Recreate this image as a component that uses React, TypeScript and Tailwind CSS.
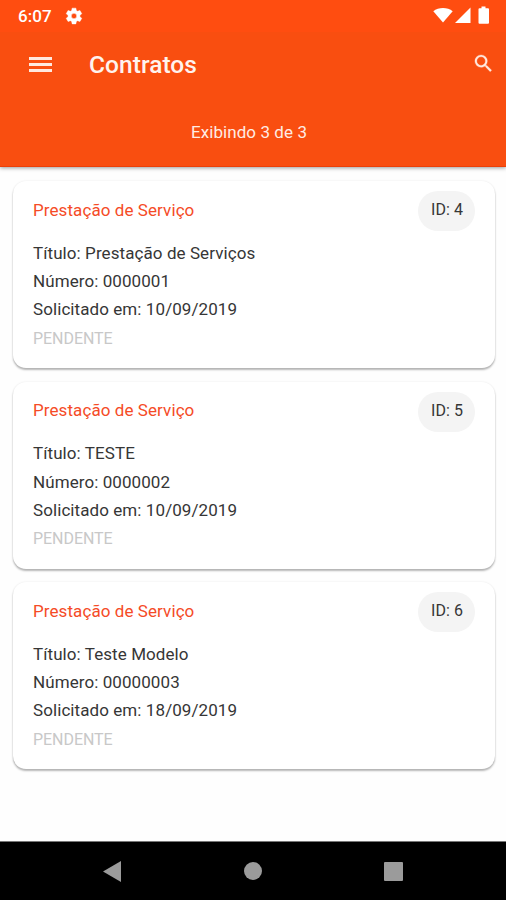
import React from "react";

type Contract = { id: number; title: string; number: string; date: string };

const contracts: Contract[] = [
  { id: 4, title: "Prestação de Serviços", number: "0000001", date: "10/09/2019" },
  { id: 5, title: "TESTE", number: "0000002", date: "10/09/2019" },
  { id: 6, title: "Teste Modelo", number: "00000003", date: "18/09/2019" },
];

function StatusBar() {
  return (
    <div className="flex h-8 items-center bg-[#ff4d10] pr-[16px] pl-[18px] text-white">
      <span className="text-[17px] leading-8 font-medium tracking-[0.1px]">6:07</span>
      <svg className="mb-px ml-[13px] size-[18px]" viewBox="0 0 24 24" fill="currentColor">
        <path
          fillRule="evenodd"
          d="M9.500 1.500h5l.6 3.200 1.700 1 3.100-1.100 2.500 4.300-2.500 2.100v2l2.500 2.100-2.500 4.300-3.100-1.100-1.700 1-.6 3.200h-5l-.6-3.200-1.700-1-3.100 1.100-2.500-4.300L4.100 13v-2L1.600 8.900l2.500-4.300 3.100 1.100 1.700-1zM12 8.400a3.600 3.600 0 1 0 0 7.200 3.600 3.600 0 0 0 0-7.200z"
          stroke="currentColor"
          strokeWidth="0.6"
          strokeLinejoin="round"
        />
      </svg>
      <div className="mb-[2px] ml-auto flex items-center">
        <svg className="h-4 w-5" viewBox="0 0 20 16" fill="currentColor">
          <path d="M.3 4.200C5.500-.2 14.500-.2 19.700 4.200L10 15.500z" />
        </svg>
        <svg className="ml-[2px] size-4" viewBox="0 0 16 16" fill="currentColor">
          <path d="M0 16 15.500.5V16z" />
        </svg>
        <svg className="ml-[7px] h-[18px] w-[12px]" viewBox="0 0 12 18" fill="currentColor">
          <path d="M3.500.5h4v1.700H10a1 1 0 0 1 1 1v13.500a1 1 0 0 1-1 1H1.500a1 1 0 0 1-1-1V3.200a1 1 0 0 1 1-1h2z" />
        </svg>
      </div>
    </div>
  );
}

function Header() {
  return (
    <header className="flex h-[167px] shrink-0 flex-col border-b border-[#ec3f08] bg-[#f94e10] text-white shadow-[0_1px_4px_rgba(0,0,0,0.4)]">
      <StatusBar />
      <div className="flex h-[66px] items-center pr-[11px] pl-[29px]">
        <div className="mb-[1px] flex w-[23px] flex-col gap-[3px]">
          <span className="h-[3px] bg-[#ffe9df]" />
          <span className="h-[3px] bg-[#ffe9df]" />
          <span className="h-[3px] bg-[#ffe9df]" />
        </div>
        <h1 className="ml-[37px] text-[24.500px] leading-8 font-medium tracking-[0.05px] text-[#fff3ee]">Contratos</h1>
        <svg className="mb-[3px] ml-auto size-[23px] text-[#ffe9df]" viewBox="0 0 24 24" fill="currentColor">
          <path
            d="M15.500 14h-.79l-.28-.27A6.471 6.471 0 0 0 16 9.500 6.500 6.500 0 1 0 9.500 16c1.610 0 3.090-.59 4.230-1.570l.27.28v.79l5 4.990L20.490 19l-4.990-5zm-6 0C7.010 14 5 11.990 5 9.500S7.010 5 9.500 5 14 7.010 14 9.500 11.990 14 9.500 14z"
            stroke="currentColor"
            strokeWidth="0.3"
          />
        </svg>
      </div>
      <p className="pt-[22px] pr-2 text-center text-[17px] leading-6 tracking-[0.08px] text-[#ffece4]">Exibindo 3 de 3</p>
    </header>
  );
}

function ContractCard({ contract }: { contract: Contract }) {
  return (
    <article className="relative h-[187px] rounded-[13px] bg-white pt-[14.700px] pl-5 text-[17px] leading-[28.400px] tracking-[0.08px] text-[#363636] shadow-[0_2px_2px_rgba(0,0,0,0.28),0_0_2px_rgba(0,0,0,0.09)]">
      <span className="absolute top-[10px] right-5 flex h-10 w-[57px] items-center justify-center rounded-full bg-[#f4f4f4] pb-px pl-px text-[16px]">
        ID: {contract.id}
      </span>
      <h2 className="mb-[14.500px] text-[#f54b27]">Prestação de Serviço</h2>
      <p>Título: {contract.title}</p>
      <p>Número: {contract.number}</p>
      <p>Solicitado em: {contract.date}</p>
      <p className="pt-[0.700px] text-[16px] tracking-[-0.05px] text-[#c8c8c8]">PENDENTE</p>
    </article>
  );
}

function NavigationBar() {
  return (
    <nav className="flex h-[59px] shrink-0 items-center justify-between border-t border-[#777] bg-black px-[103px] text-[#9b9b9b]">
      <svg className="h-[21px] w-[18px]" viewBox="0 0 18 21" fill="currentColor">
        <path d="M18 0v21L0 10.500z" />
      </svg>
      <span className="ml-px size-[18px] rounded-full bg-[#9b9b9b]" />
      <span className="size-[19px] rounded-[1px] bg-[#9b9b9b]" />
    </nav>
  );
}

export default function App() {
  return (
    <div className="flex h-[900px] w-[506px] flex-col overflow-hidden bg-[#fefefe] font-['Roboto',sans-serif]">
      <Header />
      <main className="flex flex-1 flex-col gap-[13.500px] pt-[14px] pr-[11px] pl-[13px]">
        {contracts.map((contract) => (
          <ContractCard key={contract.id} contract={contract} />
        ))}
      </main>
      <NavigationBar />
    </div>
  );
}
